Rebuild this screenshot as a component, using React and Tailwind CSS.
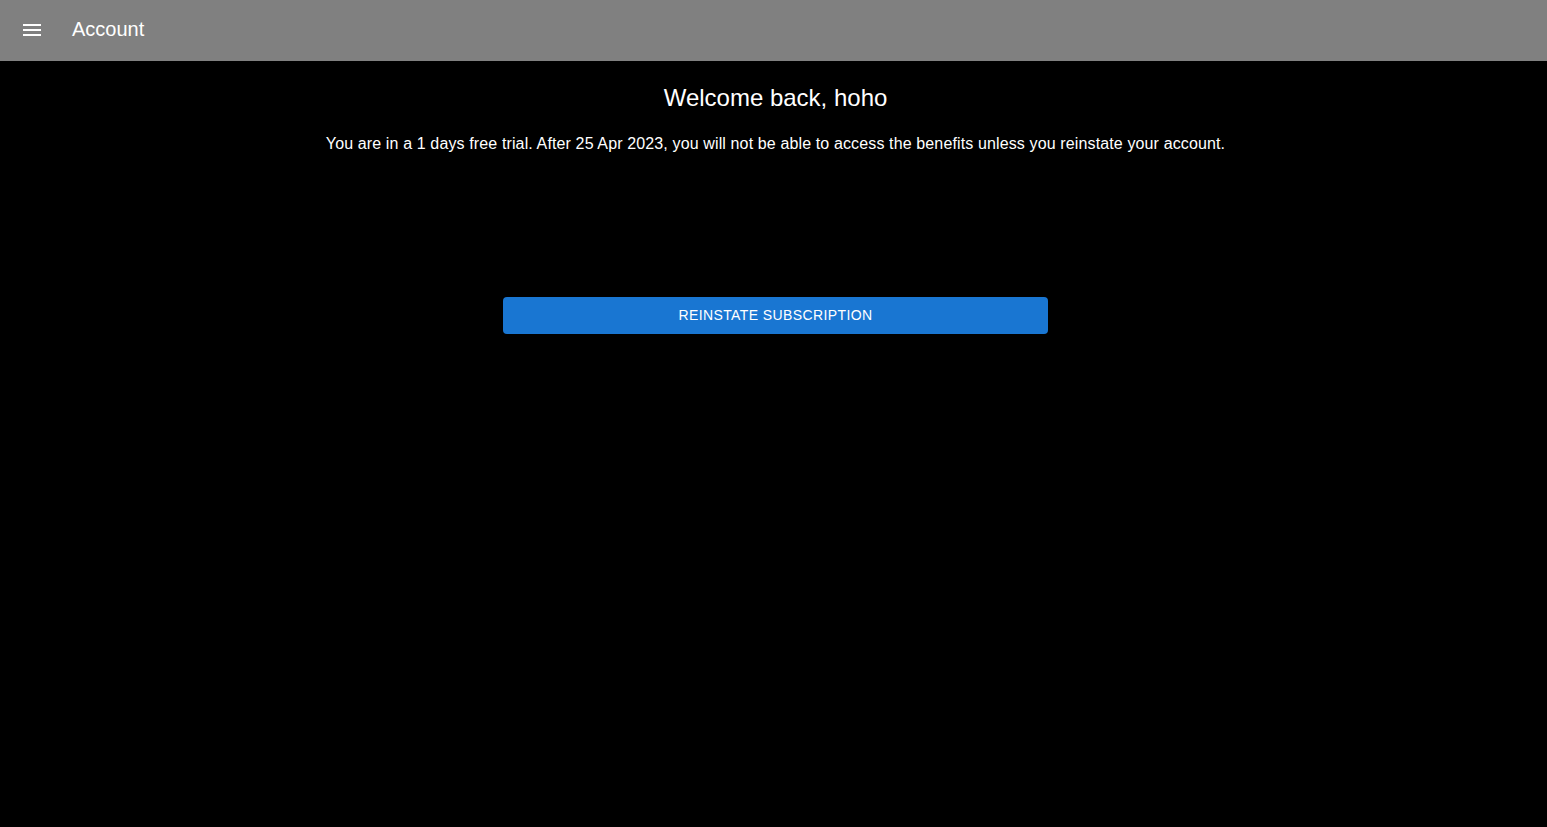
import React from 'react';

export default function App() {
  return (
    <div className="min-h-screen bg-black text-white font-['Liberation_Sans',Arial,sans-serif]">
      {/* Top bar */}
      <header className="h-[61px] bg-[#808080] flex items-center px-[23px]">
        <button className="w-[18px] h-[12px] -mt-[2px] flex flex-col justify-between">
          <span className="block h-[2px] w-full bg-white" />
          <span className="block h-[2px] w-full bg-white" />
          <span className="block h-[2px] w-full bg-white" />
        </button>
        <h1 className="ml-[31px] -mt-[3px] text-[20px] leading-[32px]">Account</h1>
      </header>

      <main className="flex flex-col items-center pt-[21px] pl-[4px]">
        <h2 className="text-[24px] leading-[32px]">Welcome back, hoho</h2>
        <p className="mt-[18px] text-[16px] leading-[24px] tracking-[0.13px]">
          You are in a 1 days free trial. After 25 Apr 2023, you will not be able to access the benefits unless you reinstate your account.
        </p>
        <button className="mt-[141px] w-[545px] h-[37px] rounded-[4px] bg-[#1976d2] text-[14px] tracking-[0.4px] uppercase">
          Reinstate Subscription
        </button>
      </main>
    </div>
  );
}
